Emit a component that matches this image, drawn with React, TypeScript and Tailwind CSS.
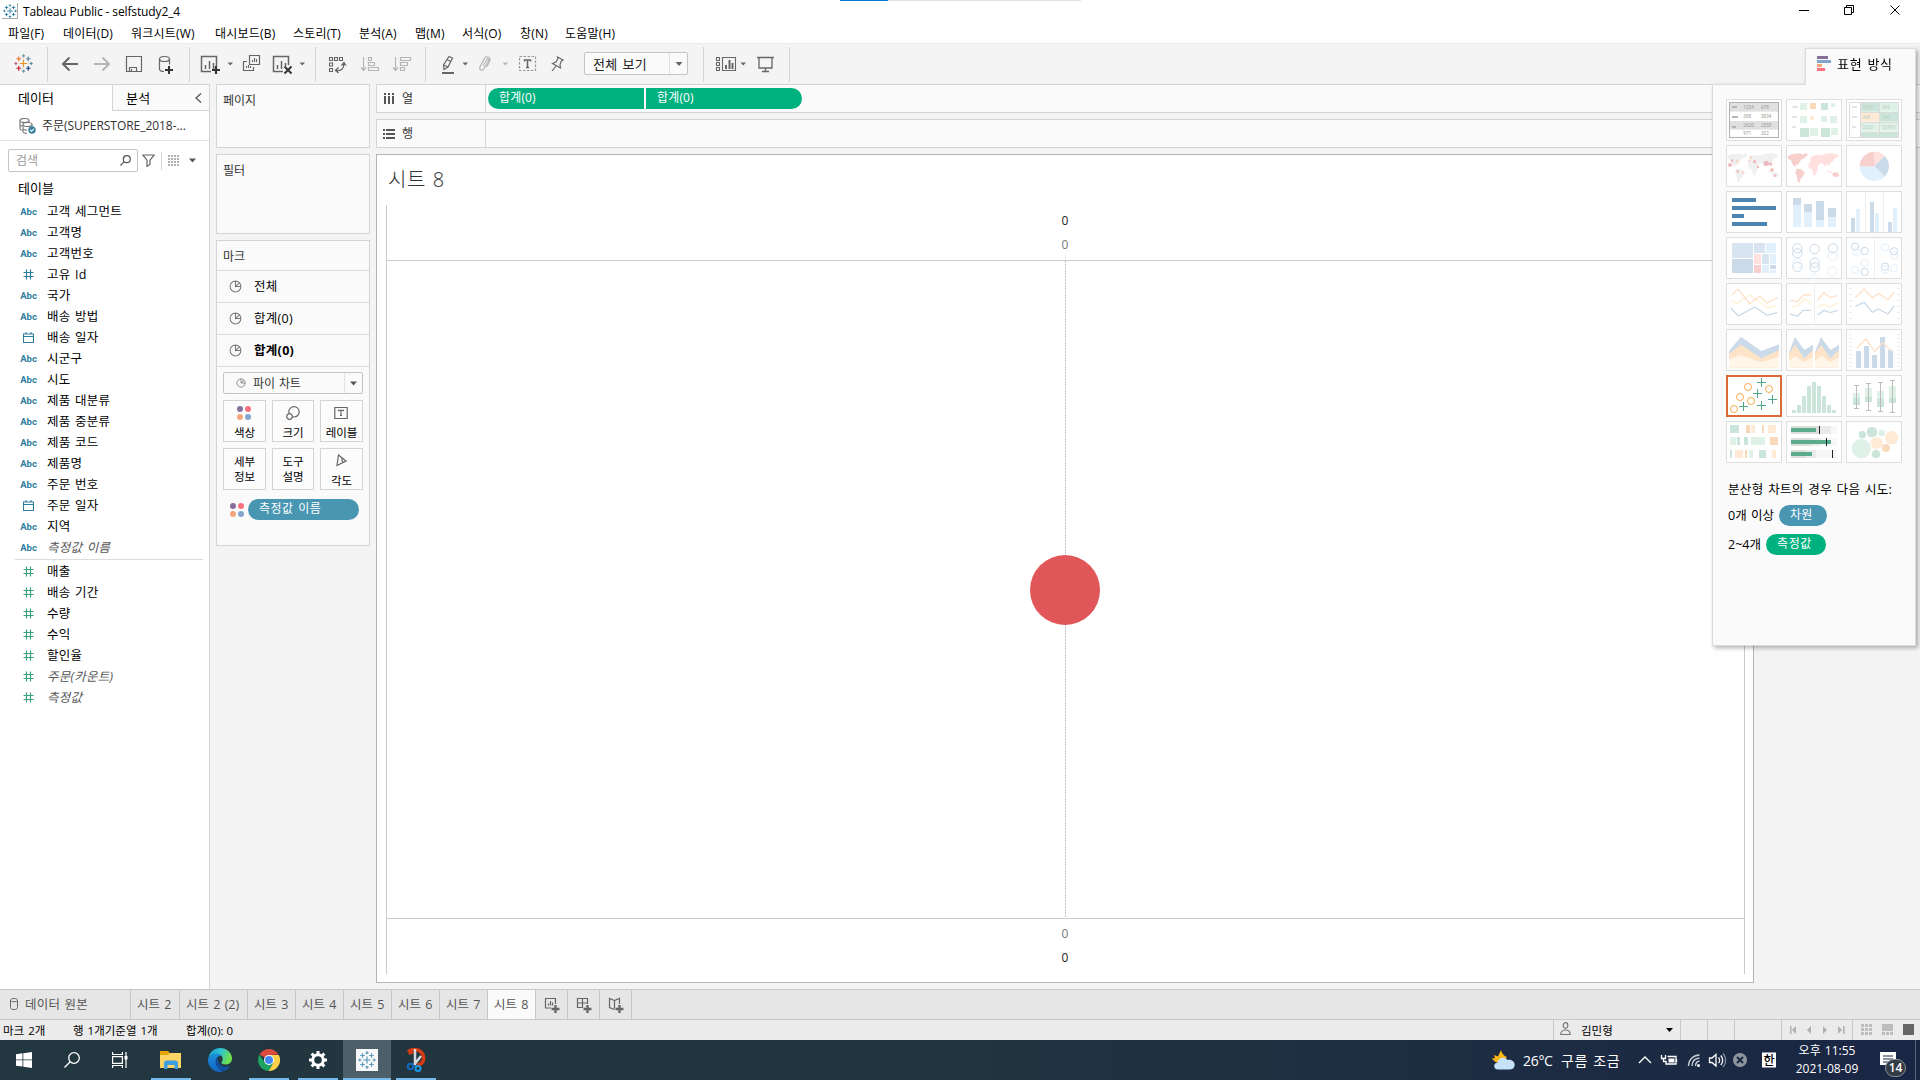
import React from 'react';

type Kids = { children?: React.ReactNode };

/* ---------- shared pieces ---------- */

// Toolbar glyph: the view box is expressed in window coordinates (row 51..75).
function Tool({ x, w, cls, children }: { x: number; w: number; cls: string } & Kids) {
  return (
    <svg className={`h-6 shrink-0 ${cls}`} width={w} height={24} viewBox={`${x} 51 ${w} 24`} fill="none" stroke="#666" strokeWidth="1.5">
      {children}
    </svg>
  );
}

const Sep = ({ cls }: { cls: string }) => <div className={`-mt-1 h-[35px] w-px shrink-0 bg-[#d4d4d4] ${cls}`} />;

function Caret({ cls, color = '#666' }: { cls: string; color?: string }) {
  return (
    <svg className={`h-6 w-2 shrink-0 ${cls}`} viewBox="0 0 8 24">
      <path d="M.5 11.500h5.500L3.250 14.500z" fill={color} />
    </svg>
  );
}

const plusMarks: [number, number, number, string][] = [
  [12, 12, 4, '#eb912c'],
  [7, 7, 2.5, '#e8762d'],
  [17, 7, 2.5, '#5b879b'],
  [7, 17, 2.5, '#c72035'],
  [17, 17, 2.5, '#1f457e'],
  [12, 4, 1.7, '#7199a6'],
  [12, 20, 1.7, '#7199a6'],
  [4, 12, 1.7, '#c0637a'],
  [20, 12, 1.7, '#59879b'],
];

function TableauMark({ cls, color }: { cls: string; color?: string }) {
  return (
    <svg className={`shrink-0 ${cls}`} viewBox="2 2 20 20" fill="none" strokeWidth="1.3">
      {plusMarks.map(([x, y, r, c], i) => (
        <path key={i} d={`M${x - r} ${y}h${r * 2}M${x} ${y - r}v${r * 2}`} stroke={color ?? c} />
      ))}
    </svg>
  );
}

function PieIcon({ cls }: { cls: string }) {
  return (
    <svg className={`shrink-0 ${cls}`} viewBox="0 0 14 14" fill="none" stroke="#777" strokeWidth="1.1">
      <circle cx="7" cy="7" r="5.8" />
      <path d="M7 1.2V7l4.2-4M7 7h5.8" />
    </svg>
  );
}

function ColorDots({ cls }: { cls: string }) {
  return (
    <svg className={`shrink-0 ${cls}`} viewBox="0 0 14 14">
      <circle cx="3" cy="3" r="3" fill="#85719b" />
      <circle cx="11" cy="3" r="3" fill="#f8717f" />
      <circle cx="3" cy="11" r="3" fill="#f4a67a" />
      <circle cx="11" cy="11" r="3" fill="#82a5cf" />
    </svg>
  );
}

/* ---------- title, menu, toolbar ---------- */

function TitleBar() {
  return (
    <div className="relative flex h-[22px] items-center bg-white text-[12px]">
      <div className="ml-0.5 flex h-4 w-4 items-center justify-center border-r border-b border-[#aaa]">
        <TableauMark cls="h-[14px] w-[14px]" color="#2f7fa8" />
      </div>
      <span className="ml-[5px] pt-0.5 tracking-[-0.12px] [word-spacing:0]">Tableau Public - selfstudy2_4</span>
      <div className="absolute top-0 left-[840px] flex h-px w-[241px] bg-[#e1e1e1]">
        <div className="h-px w-12 bg-[#0078d7]" />
      </div>
      <svg className="absolute top-0 right-0 h-5 w-[130px]" viewBox="1790 0 130 20" fill="none" stroke="#000" strokeWidth="1">
        <path d="M1799 10.5h10" />
        <path d="M1844.5 7.500h7v7h-7zM1846.500 7.500v-2h7v7h-2" />
        <path d="M1890.500 5.500l9 9M1899.500 5.500l-9 9" />
      </svg>
    </div>
  );
}

const menus: [string, string][] = [
  ['파일(F)', 'w-[55px]'],
  ['데이터(D)', 'w-[68px]'],
  ['워크시트(W)', 'w-[84px]'],
  ['대시보드(B)', 'w-[78px]'],
  ['스토리(T)', 'w-[66px]'],
  ['분석(A)', 'w-[56px]'],
  ['맵(M)', 'w-[47px]'],
  ['서식(O)', 'w-[58px]'],
  ['창(N)', 'w-[45px]'],
  ['도움말(H)', 'w-[60px]'],
];

function MenuBar() {
  return (
    <div className="flex h-[21px] items-center bg-white pt-0.5 pl-2 text-[12px] tracking-[0.2px]">
      {menus.map(([t, w]) => (
        <div key={t} className={`shrink-0 whitespace-nowrap ${w}`}>{t}</div>
      ))}
    </div>
  );
}

function Toolbar() {
  return (
    <div className="flex h-[41px] items-start border-t border-[#ececec] bg-[#f4f4f4] pt-[7px]">
      <TableauMark cls="mt-[3px] ml-[14px] h-[19px] w-[19px]" />
      <Sep cls="ml-[14px]" />
      <Tool x={60} w={20} cls="ml-3"><path d="M63 64h15M69.500 57.500L63 64l6.500 6.500" strokeWidth="2" /></Tool>
      <Tool x={92} w={20} cls="ml-3"><path d="M94 64h15M102.500 57.500L109 64l-6.500 6.500" stroke="#b5b5b5" strokeWidth="2" /></Tool>
      <Tool x={124} w={20} cls="ml-3"><path d="M126.500 56.500h15v15h-15zM129.500 71v-3.500h7V71M131.500 69v2" strokeWidth="1.2" /></Tool>
      <Tool x={156} w={20} cls="ml-3">
        <ellipse cx="164.500" cy="59" rx="5" ry="2.500" strokeWidth="1.200" />
        <path d="M159.500 59v10c0 1.500 2 2.500 4.500 2.500M169.500 59v5.500" strokeWidth="1.200" />
        <path d="M169 66v8M165 70h8" stroke="#333" strokeWidth="2" />
      </Tool>
      <Sep cls="ml-[13px]" />
      <Tool x={200} w={22} cls="ml-[10px]">
        <path d="M211 71.500h-9.500v-15h15V66" />
        <path d="M205.500 69v-4M209.500 69v-8M213.500 69v-6" />
        <path d="M216 66v8M212 70h8" stroke="#333" strokeWidth="2.200" />
      </Tool>
      <Caret cls="ml-[5px]" />
      <Tool x={242} w={20} cls="ml-[7px]">
        <path d="M249.500 55.500h10v9h-10zM247 61.500h-3.500v9h10V67" strokeWidth="1.200" />
        <path d="M252.500 62v-2M254.500 62v-4M256.500 62v-3M246.500 68v-2M248.500 68v-3M250.500 68v-2" strokeWidth="1.100" />
      </Tool>
      <Tool x={272} w={22} cls="ml-[10px]">
        <path d="M283 71.500h-9.500v-15h15V65" />
        <path d="M277.500 69v-4M281.500 69v-8M285.500 66v-3" />
        <path d="M284.500 66.500l7 7M291.500 66.500l-7 7" stroke="#333" strokeWidth="2" />
      </Tool>
      <Caret cls="ml-[5px]" />
      <Sep cls="ml-2" />
      <Tool x={327} w={20} cls="ml-[11px]">
        <path d="M329.500 57.500h3v3h-3zM334.500 57.500h3v3h-3zM339.500 57.500h3v3h-3zM329.500 63h3v3h-3zM329.500 68.500h3v3h-3z" strokeWidth="1.100" />
        <path d="M336 70.500c5 1 8-2 8-7M338.500 67.500l-3 3 3 2.500M341.500 65.500l2.500-3 2 3" strokeWidth="1.300" />
      </Tool>
      <Tool x={360} w={20} cls="ml-[13px]">
        <path d="M363.500 57v13M361 67.500l2.500 3 2.500-3M368.500 57.500h3v3h-3zM368.500 62.500h6v3h-6zM368.500 67.500h10v3h-10z" stroke="#b5b5b5" strokeWidth="1.200" />
      </Tool>
      <Tool x={392} w={20} cls="ml-3">
        <path d="M395.500 57v13M393 67.500l2.500 3 2.500-3M400.500 57.500h10v3h-10zM400.500 62.500h7v3h-7zM400.500 67.500h4v3h-4z" stroke="#b5b5b5" strokeWidth="1.200" />
      </Tool>
      <Sep cls="ml-[13px]" />
      <Tool x={440} w={16} cls="ml-[14px]">
        <path d="M449 56.500l3.500 1.500-4.500 9-4 2.500-.5-4.500zM443.500 65l4.500 2M447.500 60l3.500 1.500" strokeWidth="1.200" />
        <path d="M442 73h12" strokeWidth="2" />
      </Tool>
      <Caret cls="ml-[6px]" />
      <Tool x={477} w={16} cls="ml-[7px]">
        <path d="M483 66l3.500-6c1-2 3-1 2 .8l-4.500 8c-1.500 2.500-5.500 1-4-2l4.500-8.500c1.500-2.500 6-1.500 5.500 1.500-.3 1.500-2 5-3.500 7" stroke="#b5b5b5" strokeWidth="1.200" />
      </Tool>
      <Caret cls="ml-[9px]" color="#b5b5b5" />
      <Tool x={518} w={20} cls="ml-2">
        <path d="M519.500 56.500h16v14h-16z" stroke="#999" strokeDasharray="2.500 1.500" strokeWidth="1.200" />
        <path d="M524.500 61.500v-1.500h6v1.500M527.500 60v7.500M526 67.500h3" />
      </Tool>
      <Tool x={550} w={16} cls="ml-3">
        <path d="M557.500 57l5.500 3-1.500.8-1.500 3.700.5 3.500-8-4.500 3.500-1.500 2-3.500zM556 66l-4 5" strokeWidth="1.200" />
      </Tool>
      <div className="mt-px ml-[18px] flex h-[23px] w-[104px] shrink-0 items-center rounded-[2px] border border-[#c4c4c4] bg-[#fafafa] pl-2">
        <span className="w-[76px] pt-px text-[13px] tracking-[0.4px] whitespace-nowrap text-[#222]">전체 보기</span>
        <div className="flex h-[21px] items-center border-l border-[#e2e2e2] pl-[5px]">
          <svg className="h-2 w-2" viewBox="0 0 8 8"><path d="M.5 2h7L4 6z" fill="#666" /></svg>
        </div>
      </div>
      <Sep cls="ml-[15px]" />
      <Tool x={715} w={22} cls="ml-[11px]">
        <path d="M716.500 57.500h3v3h-3zM716.500 62.500h3v3h-3zM716.500 67.500h3v3h-3zM722.500 57.500h13v13h-13z" strokeWidth="1.100" />
        <path d="M726 69v-4M729.500 69v-9M732.500 69v-6" strokeWidth="2" />
      </Tool>
      <Caret cls="ml-[3px]" />
      <Tool x={756} w={20} cls="ml-2">
        <path d="M757 57.500h17M759 58v10h13V58M765.500 68v4M762 71.500h7" strokeWidth="1.300" />
      </Tool>
      <Sep cls="ml-[13px]" />
    </div>
  );
}

/* ---------- data pane ---------- */

type Field = [kind: 'abc' | 'num' | 'date', label: string, italic?: boolean];

const dims: Field[] = [
  ['abc', '고객 세그먼트'], ['abc', '고객명'], ['abc', '고객번호'], ['num', '고유 Id'], ['abc', '국가'],
  ['abc', '배송 방법'], ['date', '배송 일자'], ['abc', '시군구'], ['abc', '시도'], ['abc', '제품 대분류'],
  ['abc', '제품 중분류'], ['abc', '제품 코드'], ['abc', '제품명'], ['abc', '주문 번호'], ['date', '주문 일자'],
  ['abc', '지역'], ['abc', '측정값 이름', true],
];

const measures: Field[] = [
  ['num', '매출'], ['num', '배송 기간'], ['num', '수량'], ['num', '수익'], ['num', '할인율'],
  ['num', '주문(카운트)', true], ['num', '측정값', true],
];

function FieldRow({ f, color }: { f: Field; color: string }) {
  const [kind, label, italic] = f;
  return (
    <div className="flex h-[21px] items-center pl-[19px]">
      <div className={`flex w-5 shrink-0 justify-center ${color}`}>
        {kind === 'abc' && <span className="pr-px font-['Roboto'] text-[9.5px] leading-none font-bold">Abc</span>}
        {kind === 'num' && (
          <svg className="mr-px h-[11px] w-[11px]" viewBox="0 0 11 11" stroke="currentColor" strokeWidth="1.200">
            <path d="M3.500 .5v10M7.500 .5v10M.5 3.500h10M.5 7.500h10" />
          </svg>
        )}
        {kind === 'date' && (
          <svg className="mr-px h-[11px] w-[11px]" viewBox="0 0 11 11" fill="none" stroke="currentColor" strokeWidth="1.100">
            <path d="M.5 2h10v8.500H.5zM.5 4.500h10M3 0v2M8 0v2" />
          </svg>
        )}
      </div>
      <span className={`ml-2 pt-0.5 text-[12.5px] tracking-[0.25px] whitespace-nowrap ${italic ? 'text-[#555] italic' : 'text-black'}`}>{label}</span>
    </div>
  );
}

function DataPane() {
  return (
    <div className="flex w-[210px] shrink-0 flex-col border-t border-r border-[#d4d4d4] bg-white">
      <div className="flex h-[26px] text-[13px]">
        <div className="w-[112px] pl-[18px] leading-[26px]">데이터</div>
        <div className="flex flex-1 items-center justify-between border-b border-l border-[#d4d4d4] bg-[#fafafa] pr-[7px] pl-[13px]">
          <span className="pt-px tracking-[0.2px]">분석</span>
          <svg className="h-[10px] w-[7px]" viewBox="0 0 7 10" fill="none" stroke="#555" strokeWidth="1.300"><path d="M6 .5L1 5l5 4.500" /></svg>
        </div>
      </div>
      <div className="flex h-[30px] items-center border-b border-[#e2e2e2] pl-[19px] text-[#333]">
        <svg className="h-4 w-[17px]" viewBox="0 0 17 16" fill="none" stroke="#777" strokeWidth="1.100">
          <ellipse cx="5.500" cy="2.500" rx="4.500" ry="2" />
          <path d="M1 2.500v8c0 1 1 1.700 2.500 2M10 2.500v2M1 6.500c0 1 1 1.500 2.500 1.800" />
          <ellipse cx="8.500" cy="6.500" rx="4.500" ry="2" />
          <path d="M4 6.500v7c0 1 1.500 1.800 4 1.900M13 6.500v2M4 10.500c0 1 1.500 1.500 4 1.600" />
          <circle cx="13" cy="12" r="3.700" fill="#3c7f9f" stroke="none" />
          <path d="M11.200 12l1.300 1.300 2.300-2.500" stroke="#fff" />
        </svg>
        <span className="ml-[6px] text-[12px] tracking-[-0.05px] whitespace-nowrap">주문(SUPERSTORE_2018-...</span>
      </div>
      <div className="mt-2 flex h-[23px] items-center pl-2">
        <div className="flex h-[23px] w-[130px] items-center justify-between rounded-[2px] border border-[#c4c4c4] pr-[6px] pl-[7px] text-[12px] text-[#999]">
          <span>검색</span>
          <svg className="h-[11px] w-[11px]" viewBox="0 0 11 11" fill="none" stroke="#555" strokeWidth="1.200"><circle cx="6.800" cy="4.200" r="3.500" /><path d="M4.300 6.700L.5 10.500" /></svg>
        </div>
        <svg className="ml-1 h-[13px] w-[13px]" viewBox="0 0 13 13" fill="none" stroke="#666" strokeWidth="1.200"><path d="M.8 1h11.400L8 6.200v4.300L5 12.300V6.200z" /></svg>
        <div className="ml-[6px] h-[18px] w-px bg-[#d4d4d4]" />
        <svg className="ml-[6px] h-[11px] w-3" viewBox="0 0 12 11" stroke="#666" strokeWidth="1.100" strokeDasharray="2 1"><path d="M0 1h12M0 4h12M0 7h12M0 10h12" /></svg>
        <svg className="ml-[9px] h-[5px] w-[7px]" viewBox="0 0 7 5"><path d="M0 .5h7l-3.500 4z" fill="#555" /></svg>
      </div>
      <div className="mt-[7px] h-[22px] shrink-0 pl-[18px] text-[13px] leading-[19px]">테이블</div>
      {dims.map((f) => <FieldRow key={f[1]} f={f} color="text-[#2f7d9c]" />)}
      <div className="mt-px mr-[6px] ml-[15px] mb-px h-px shrink-0 bg-[#dcdcdc]" />
      {measures.map((f) => <FieldRow key={f[1]} f={f} color="text-[#3aa37d]" />)}
    </div>
  );
}

/* ---------- cards ---------- */

function MarkButton({ cls, children }: { cls: string } & Kids) {
  return (
    <div className={`flex h-[42px] flex-col items-center border border-[#d4d4d4] bg-[#fcfcfc] text-[11.5px] leading-[15px] whitespace-nowrap ${cls}`}>
      {children}
    </div>
  );
}

function Cards() {
  return (
    <div className="ml-[6px] flex w-[154px] shrink-0 flex-col gap-[6px] text-[12px] text-[#333]">
      <div className="h-16 border border-[#d4d4d4] bg-[#fafafa] pt-[7px] pl-[6px] leading-[17px]">페이지</div>
      <div className="h-20 border border-[#d4d4d4] bg-[#fafafa] pt-[7px] pl-[6px] leading-[17px]">필터</div>
      <div className="h-[306px] border border-[#d4d4d4] bg-[#fafafa]">
        <div className="h-[29px] pl-[6px] leading-[31px]">마크</div>
        {['전체', '합계(0)', '합계(0)'].map((t, i) => (
          <div key={i} className={`flex h-8 items-center border-t border-[#dcdcdc] pl-3 text-black ${i === 2 ? 'font-bold' : ''}`}>
            <PieIcon cls="mb-px h-[13px] w-[13px]" />
            <span className="ml-3 pt-0.5 text-[12.5px] tracking-[0.3px]">{t}</span>
          </div>
        ))}
        <div className="border-t border-[#dcdcdc] px-[6px] pt-[5px]">
          <div className="flex h-[22px] w-[140px] items-center rounded-[2px] border border-[#c4c4c4] pl-3">
            <PieIcon cls="h-[10px] w-[10px]" />
            <span className="ml-[7px] w-[91px] pt-px text-[12px] tracking-[-0.1px]">파이 차트</span>
            <div className="flex h-5 items-center border-l border-[#e2e2e2] pl-[5px]">
              <svg className="h-[5px] w-[7px]" viewBox="0 0 7 5"><path d="M0 .5h7l-3.500 4z" fill="#555" /></svg>
            </div>
          </div>
          <div className="mt-[6px] flex gap-[6px] text-black">
            <MarkButton cls="w-[43px] pt-[5px]"><ColorDots cls="mr-px mb-[5px] h-[14px] w-[14px]" />색상</MarkButton>
            <MarkButton cls="w-[42px] pt-[5px]">
              <svg className="mb-[5px] h-[14px] w-[14px]" viewBox="0 0 14 14" fill="none" stroke="#666" strokeWidth="1.200"><circle cx="8" cy="5.800" r="5.200" /><circle cx="3.500" cy="10.500" r="2.800" fill="#fafafa" /></svg>
              크기
            </MarkButton>
            <MarkButton cls="w-[43px] pt-[5px]">
              <svg className="mr-[2px] mb-[5px] h-[14px] w-[14px]" viewBox="0 0 14 14" fill="none" stroke="#666" strokeWidth="1.200"><path d="M.8 1.500h12.400v11H.8zM4.500 5.200V4.300h5v.9M7 4.300v5.200M6 9.500h2" /></svg>
              레이블
            </MarkButton>
          </div>
          <div className="mt-[6px] flex gap-[6px] text-black">
            <MarkButton cls="w-[43px] pt-[5px]"><span>세부</span><span>정보</span></MarkButton>
            <MarkButton cls="w-[42px] pt-[5px]"><span>도구</span><span>설명</span></MarkButton>
            <MarkButton cls="w-[43px] pt-[5px]">
              <svg className="mr-px mb-[6px] h-[13px] w-[12px]" viewBox="0 0 12 13" fill="none" stroke="#666" strokeWidth="1.200"><path d="M3.500 1l7.500 6L2 11.500zM7 4c-.3 2 .2 3.500 1.200 4.500" /></svg>
              각도
            </MarkButton>
          </div>
          <div className="mt-[9px] flex h-[21px] items-center pl-[7px]">
            <ColorDots cls="h-[14px] w-[14px]" />
            <div className="ml-1 h-[21px] w-[111px] rounded-full bg-[#4996b2] pl-[11px] text-[12px] leading-[19px] tracking-[0.5px] text-white">측정값 이름</div>
          </div>
        </div>
      </div>
    </div>
  );
}

/* ---------- shelves and sheet ---------- */

function Shelf({ label, icon, children }: { label: string; icon: React.ReactNode } & Kids) {
  return (
    <div className="flex h-[29px] shrink-0 border-y border-l border-[#d4d4d4] bg-[#fafafa]">
      <div className="flex w-[109px] shrink-0 items-center border-r border-[#d4d4d4] pl-[6px] text-[12px] text-[#333]">
        {icon}
        <span className="ml-[7px] pt-px">{label}</span>
      </div>
      {children}
    </div>
  );
}

function Workspace() {
  return (
    <div className="ml-[6px] flex min-w-0 flex-1 flex-col">
      <Shelf label="열" icon={<svg className="h-[13px] w-3" viewBox="0 0 12 13" fill="#555"><path d="M1 1h2v2H1zM1 4h2v8H1zM5 1h2v2H5zM5 4h2v8H5zM9 1h2v2H9zM9 4h2v8H9z" /></svg>}>
        <div className="mt-[3px] ml-[2px] flex h-[21px] gap-[2px] text-[12px] leading-[19px] tracking-[0.15px] text-white">
          <div className="w-[156px] rounded-l-full bg-[#00b180] pl-[11px]">합계(0)</div>
          <div className="w-[156px] rounded-r-full bg-[#00b180] pl-[11px]">합계(0)</div>
        </div>
      </Shelf>
      <div className="h-[6px] shrink-0" />
      <Shelf label="행" icon={<svg className="h-3 w-3" viewBox="0 0 12 12" fill="#555"><path d="M0 1h2v2H0zM3 1h9v2H3zM0 5h2v2H0zM3 5h9v2H3zM0 9h2v2H0zM3 9h9v2H3z" /></svg>} />
      <div className="mt-[6px] flex h-[829px] w-[1378px] flex-col border border-[#b4b4b4] bg-white pr-2 pl-[9px]">
        <div className="h-[50px] pt-[9px] pl-[2px] text-[20px] leading-[32px] font-light tracking-[0.6px] text-[#333]">시트 8</div>
        <div className="flex h-[769px] flex-col border-x border-[#cbcbcb] text-center text-[12px]">
          <div className="flex h-[56px] flex-col items-center border-b border-[#cbcbcb] pt-1 pr-px">
            <span className="h-6 leading-6 text-[#222]">0</span>
            <span className="h-[22px] leading-6 text-[#777]">0</span>
            <div className="h-[5px] w-px bg-[#f0f0f0]" />
          </div>
          <div className="relative flex flex-1 items-center justify-center pr-px">
            <div className="absolute inset-y-0 left-[678px] w-px bg-[repeating-linear-gradient(to_bottom,#c4c4c4_0px,#c4c4c4_2px,#ffffff_2px,#ffffff_3px)]" />
            <div className="relative h-[70px] w-[70px] rounded-full bg-[#e15759]" />
          </div>
          <div className="flex h-[56px] flex-col items-center border-t border-[#cbcbcb] pt-[3px] pr-px">
            <span className="h-6 leading-6 text-[#777]">0</span>
            <span className="h-6 leading-6 text-[#222]">0</span>
          </div>
        </div>
      </div>
    </div>
  );
}

/* ---------- Show Me ---------- */

// Thumbnails are drawn on a 3x grid; x/y is the grid origin of each cell.
function Thumb({ x, y, on, children }: { x: number; y: number; on?: boolean } & Kids) {
  return on ? (
    <svg className="h-[42px] w-[56px] border-2 border-[#dc6a35] bg-white" viewBox={`${x + 6} ${y + 6} 156 114`} fill="none">{children}</svg>
  ) : (
    <svg className="h-[42px] w-[56px] border border-[#dedede] bg-white" viewBox={`${x + 3} ${y + 3} 162 120`} fill="none">{children}</svg>
  );
}

type R = [number, number, number, number, string];
const Rects = ({ d }: { d: R[] }) => (
  <>{d.map(([x, y, w, h, c], i) => <rect key={i} x={x} y={y} width={w} height={h} fill={c} />)}</>
);
type C = [number, number, number, string];
const Dots = ({ d }: { d: C[] }) => <>{d.map(([x, y, r, c], i) => <circle key={i} cx={x} cy={y} r={r} fill={c} />)}</>;
const Rings = ({ d, r, w }: { d: [number, number, string][]; r: number; w: number }) => (
  <>{d.map(([x, y, c], i) => <circle key={i} cx={x} cy={y} r={r} stroke={c} strokeWidth={w} />)}</>
);

const G1 = '#cce5da', G2 = '#e0f2e8', O1 = '#fad9bb', O2 = '#ffead6', B1 = '#cbdae8', B2 = '#e2f0fb', R1 = '#f7cfcd', R2 = '#ffe0df', K = '#e4e4e4';
const LO = '#fee2ca', LY = '#fff1d6';

function World({ dx, a, b }: { dx: number; a: string; b: string }) {
  return (
    <g transform={`translate(${dx} 0)`}>
      <path fill={a} d="M2 348l12-5 22-3 12 4 6-4 8 2-6 8-8 6-6 2-6 10-4 6-8 1 4 8-8-5-6-8-2-8-8-6-4-2zM28 386l12 1 12 9-4 12-8 8-4 13-5-4-2-15-5-12z" />
      <path fill={b} d="M68 356l8-8 12-4 12 2 14-4 18-3 22 6-4 8-8 2-5 10-8 4-4 10-6-8-6 10-8-12-8 2-6 8 0 10-6 16-6 2-4-18-10-4-2-12 6-8z" />
      <path fill={a} d="M133 402l10-6 10 2 2 10-6 4-10-3z" />
      <path fill={b} d="M118 388l8 6 8 2-2 4-10-4z" />
    </g>
  );
}

function Gallery() {
  return (
    <div className="grid grid-cols-[56px_56px_56px] gap-1">
      <Thumb x={78} y={177}>
        <rect x="88.500" y="187.500" width="147" height="105" stroke="#b0b0b0" strokeWidth="3" />
        <Rects d={[[90, 189, 144, 26, '#e0e0e0'], [90, 243, 144, 26, '#e0e0e0'], [96, 198, 15, 6, '#b5b5b5'], [96, 228, 18, 6, '#b5b5b5'], [96, 258, 12, 6, '#b5b5b5']]} />
        <g fill="#999" fontSize="14" fontFamily="Roboto">
          <text x="130" y="207">1234</text><text x="183" y="207">678</text><text x="130" y="235">368</text><text x="183" y="235">3034</text>
          <text x="130" y="262">2620</text><text x="183" y="262">2559</text><text x="130" y="286">971</text><text x="183" y="286">322</text>
        </g>
      </Thumb>
      <Thumb x={258} y={177}>
        <Rects d={[[276, 198, 18, 6, K], [276, 228, 15, 6, K], [276, 258, 12, 6, K], [300, 189, 21, 21, G2], [330, 189, 18, 18, O1], [363, 189, 21, 21, G1], [393, 189, 12, 12, G2], [300, 228, 21, 21, G2], [330, 228, 12, 12, O2], [363, 228, 18, 18, G2], [390, 228, 21, 21, G2], [300, 264, 27, 27, G1], [330, 264, 24, 24, G2], [363, 264, 27, 27, G1], [393, 264, 21, 21, G2]]} />
      </Thumb>
      <Thumb x={438} y={177}>
        <Rects d={[[456, 198, 15, 6, K], [456, 228, 15, 6, K], [456, 258, 12, 6, K], [483, 189, 54, 26, G1], [540, 189, 54, 26, G2], [483, 219, 54, 26, O2], [540, 219, 54, 26, G1], [483, 249, 54, 26, G2], [540, 249, 54, 26, G2], [483, 279, 54, 12, G1], [540, 279, 54, 12, G1]]} />
        <path d="M448.500 187.500h147v105h-147zM481.500 187v105M538.500 187v105M481 217.500h114M481 247.500h114M481 277.500h114" stroke="#dcdcdc" strokeWidth="3" />
        <g fill="#b9cfc4" fontSize="14" fontFamily="Roboto">
          <text x="487" y="207">1234</text><text x="546" y="207">546</text><text x="487" y="238">368</text><text x="546" y="238">340</text><text x="487" y="267">2620</text><text x="546" y="267">53890</text>
        </g>
      </Thumb>

      <Thumb x={78} y={315}>
        <World dx={81} a="#f0f0f0" b="#f0f0f0" />
        <Dots d={[[90, 375, 6, '#ecb9bf'], [96, 362, 4, '#ecb9bf'], [112, 364, 5, '#fbdad6'], [152, 352, 5, '#fbd5c8'], [164, 365, 5, '#ecb9bf'], [148, 363, 4, '#fbdad6'], [199, 370, 8, '#ecb9bf'], [212, 372, 5, '#ecb9bf'], [216, 390, 6, '#f3c4c4'], [174, 381, 4, '#ecb9bf'], [129, 397, 5, '#fbdad6'], [113, 394, 4, '#ecb9bf'], [225, 407, 4, '#ecb9bf']]} />
      </Thumb>
      <Thumb x={258} y={315}><World dx={262} a={R1} b={R2} /></Thumb>
      <Thumb x={438} y={315}>
        <path d="M523 379V335.500A43.500 43.500 0 0 1 554 348z" fill={R2} />
        <path d="M523 379L554 348A43.500 43.500 0 0 1 554 410z" fill={B1} />
        <path d="M523 379L554 410A43.500 43.500 0 0 1 479.500 379z" fill={B2} />
        <path d="M523 379H479.500A43.500 43.500 0 0 1 523 335.500z" fill={R1} />
      </Thumb>

      <Thumb x={78} y={453}>
        <Rects d={[[96, 474, 72, 12, '#4e84b0'], [96, 498, 132, 12, '#4e84b0'], [96, 522, 36, 12, '#4e84b0'], [96, 546, 105, 12, '#4e84b0']]} />
      </Thumb>
      <Thumb x={258} y={453}>
        <Rects d={[[279, 474, 24, 21, B1], [279, 495, 24, 66, B2], [312, 492, 24, 24, B1], [312, 516, 24, 45, B2], [348, 483, 24, 57, B1], [348, 540, 24, 21, B2], [384, 504, 24, 27, B1], [384, 531, 24, 30, B2]]} />
      </Thumb>
      <Thumb x={438} y={453}>
        <Rects d={[[495, 456, 3, 120, '#eee'], [549, 456, 3, 120, '#eee'], [453, 534, 12, 42, B1], [468, 507, 12, 69, B2], [510, 486, 12, 90, B1], [525, 519, 12, 57, B2], [564, 546, 12, 30, B1], [579, 504, 12, 72, B2]]} />
      </Thumb>

      <Thumb x={78} y={591}>
        <Rects d={[[96, 609, 63, 45, '#d8e5f0'], [96, 657, 63, 42, B1], [162, 609, 33, 30, '#d8e5f0'], [198, 609, 30, 30, B2], [162, 642, 21, 30, R2], [186, 642, 21, 30, '#d8e5f0'], [210, 642, 18, 30, B2], [162, 675, 21, 24, R1], [186, 675, 21, 24, B2], [210, 675, 18, 12, B1], [210, 690, 18, 9, B2]]} />
      </Thumb>
      <Thumb x={258} y={591}>
        <Rings r={14} w={3} d={[[292, 625, B1], [292, 640, B1], [344, 627, B1], [399, 625, B1], [398, 648, B2], [292, 681, B1], [344, 668, B1], [344, 682, B1], [397, 694, B2], [344, 718, B2], [292, 670, B2]]} />
      </Thumb>
      <Thumb x={438} y={591}>
        <Rings r={11} w={3} d={[[465, 620, B1], [468, 635, B2], [494, 633, B1], [555, 622, B2], [582, 634, B1], [583, 646, B2], [494, 669, B2], [465, 690, B2], [494, 696, B1], [555, 680, B1], [555, 689, B2], [582, 685, B2]]} />
        <path d="M523.500 594v120" stroke="#eee" strokeWidth="3" />
      </Thumb>

      <Thumb x={78} y={54}>
        <g strokeWidth="4">
          <path d="M93 107l18 9 38-26 52 38 30-6" stroke={LY} />
          <path d="M96 90l18-18 35 44 30-22 22 20 32-16" stroke={LO} />
          <path d="M92 129l23 24 49-27 37 25 31-9" stroke={B1} />
        </g>
      </Thumb>
      <Thumb x={258} y={54}>
        <path d="M343.500 57v120" stroke="#eee" strokeWidth="3" />
        <g strokeWidth="4">
          <path d="M270 106l22 4 18-20h23M352 107l20-24 18 14 23-5" stroke={LO} />
          <path d="M270 125h22l20-24 20 14M352 125l18-6 22 6 22-12" stroke={LY} />
          <path d="M270 147l22 7 18-18h23M352 150l20-14 18 7 23-7" stroke={B1} />
        </g>
      </Thumb>
      <Thumb x={438} y={54}>
        <path d="M451.500 69v99M595.500 69v99" stroke="#eaeaea" strokeWidth="9" strokeDasharray="3 15" />
        <g strokeWidth="4">
          <path d="M466 98l26-26 25 26 18-12 29 18 20-24" stroke={LO} />
          <path d="M466 124l26-12 25 30 18-10 29 15 18-24" stroke={B1} />
        </g>
      </Thumb>

      <Thumb x={78} y={192}>
        <path d="M87 258l36-43 61 43 53-20v70H87z" fill={B1} /><path d="M87 266l36-27 61 41 53-24v52H87z" fill="#fde3c8" /><path d="M87 282l36-11 61 21 53-17v33H87z" fill="#fff5e8" />
      </Thumb>
      <Thumb x={258} y={192}>
        <path d="M267 262l18-46 28 39 26-16v69h-72zM345 262l18-46 28 39 26-16v69h-72z" fill={B1} /><path d="M267 265l18-26 28 41 26-25v53h-72zM345 265l18-26 28 41 26-25v53h-72z" fill="#fde3c8" /><path d="M267 288l18-16 28 20 26-17v33h-72zM345 288l18-16 28 20 26-17v33h-72z" fill="#fff5e8" />
      </Thumb>
      <Thumb x={438} y={192}>
        <path d="M451.500 207v99M595.500 207v99" stroke="#eaeaea" strokeWidth="9" strokeDasharray="3 9" />
        <Rects d={[[468, 258, 15, 51, B1], [492, 243, 15, 66, B1], [516, 270, 15, 39, B1], [540, 216, 15, 93, B1], [564, 255, 15, 54, B1]]} />
        <path d="M471 248l27-26 26 37 24-26 28 26" stroke={LO} strokeWidth="4" />
      </Thumb>

      <Thumb x={78} y={330} on>
        <Rings r={10.5} w={3} d={[[144, 366, '#f5a94a'], [207, 372, '#f5a94a'], [120, 396, '#f5a94a'], [153, 408, '#f5a94a'], [102, 432, '#f5a94a']]} />
        <path d="M171 352.500h27M184.500 339v27M159 385.500h27M172.500 372v27M204 403.500h27M217.500 390v27M117 424.500h27M130.500 411v27M171 421.500h27M184.500 408v27" stroke="#4fa88a" strokeWidth="3" />
      </Thumb>
      <Thumb x={258} y={330}>
        <Rects d={[[276, 435, 12, 9, G1], [291, 420, 12, 24, G1], [306, 393, 12, 51, G1], [321, 363, 12, 81, G1], [336, 351, 12, 93, G1], [351, 363, 12, 81, G1], [366, 393, 12, 51, G1], [381, 420, 12, 24, G1], [396, 435, 12, 9, G1]]} />
      </Thumb>
      <Thumb x={438} y={330}>
        <Rects d={[[459, 384, 21, 15, G2], [459, 399, 21, 21, G1], [495, 369, 21, 27, G2], [495, 396, 21, 15, G1], [531, 378, 21, 24, G2], [531, 402, 21, 24, G1], [567, 363, 21, 36, G2], [567, 399, 21, 15, G1]]} />
        <path d="M469.500 361v69M462 361.500h15M462 430.500h15M505.500 355v81M498 355.500h15M498 436.500h15M541.500 352v87M534 352.500h15M534 439.500h15M577.500 346v96M570 346.500h15M570 442.500h15" stroke="#bdbdbd" strokeWidth="3" />
      </Thumb>

      <Thumb x={78} y={468}>
        <Rects d={[[90, 480, 27, 24, G1], [138, 480, 12, 24, O1], [153, 480, 12, 24, O2], [186, 480, 6, 24, O1], [204, 480, 24, 24, O2], [90, 516, 18, 24, G2], [111, 516, 9, 24, G1], [132, 516, 12, 24, G1], [153, 516, 42, 24, G2], [210, 516, 24, 24, O1], [90, 555, 6, 24, G1], [105, 555, 24, 24, O2], [135, 555, 6, 24, O1], [147, 555, 12, 24, G2], [177, 555, 21, 24, G1], [216, 555, 12, 24, O2]]} />
      </Thumb>
      <Thumb x={258} y={468}>
        <Rects d={[[273, 483, 138, 24, '#f6f7f8'], [273, 483, 120, 24, '#eaeaea'], [273, 483, 87, 24, '#dedede'], [273, 489, 75, 12, '#59ad8c'], [357, 483, 3, 24, '#222'], [273, 519, 138, 24, '#f6f7f8'], [273, 519, 88, 24, '#eaeaea'], [273, 519, 60, 24, '#dedede'], [273, 525, 120, 12, '#59ad8c'], [378, 519, 3, 24, '#222'], [273, 555, 138, 24, '#f6f7f8'], [273, 555, 75, 24, '#eaeaea'], [273, 555, 45, 24, '#dedede'], [273, 561, 63, 12, '#59ad8c'], [396, 555, 3, 24, '#222']]} />
      </Thumb>
      <Thumb x={438} y={468}>
        <Dots d={[[484, 551, 29, G2], [487, 509, 11, G1], [516, 501, 16, G1], [545, 504, 10, G2], [575, 518, 20, O2], [530, 534, 18, O2], [558, 549, 12, O1], [528, 567, 13, G1]]} />
      </Thumb>
    </div>
  );
}

function ShowMe() {
  return (
    <div className="absolute top-12 left-[1712px] flex w-[204px] flex-col items-end drop-shadow-[2px_2px_2px_rgba(0,0,0,0.3)]">
      <div className="relative z-10 flex h-[37px] w-[111px] items-start border-x border-t border-[#dcdcdc] bg-[#fafafa] pt-[7px] pl-[11px]">
        <svg className="h-[15px] w-[14px]" viewBox="0 0 14 15"><path d="M0 0h11v3H0z" fill="#85719b" /><path d="M0 4h14v3H0z" fill="#82a5cf" /><path d="M0 8h5v3H0z" fill="#f4a67a" /><path d="M0 12h8v3H0z" fill="#f8717f" /></svg>
        <span className="ml-[6px] text-[13px] leading-[17px] tracking-[0.7px] whitespace-nowrap">표현 방식</span>
      </div>
      <div className="-mt-px h-[562px] w-[204px] border border-[#dcdcdc] bg-[#fafafa] pt-[14px] pl-[13px] text-[12.5px]">
        <Gallery />
        <div className="mt-[17px] ml-[2px] h-5 leading-5 tracking-[0.35px] whitespace-nowrap">분산형 차트의 경우 다음 시도:</div>
        <div className="mt-[5px] ml-[2px] flex h-[21px] items-center leading-5">
          <span className="w-[51px] whitespace-nowrap">0개 이상</span>
          <div className="h-[21px] w-12 rounded-full bg-[#4996b2] pl-[11px] text-[12px] leading-[19px] tracking-[0.3px] text-white">차원</div>
        </div>
        <div className="mt-2 ml-[2px] flex h-[21px] items-center leading-5">
          <span className="w-[38px] whitespace-nowrap">2~4개</span>
          <div className="h-[21px] w-[60px] rounded-full bg-[#00b180] pl-[11px] text-[12px] leading-[19px] tracking-[0.6px] text-white">측정값</div>
        </div>
      </div>
    </div>
  );
}

/* ---------- sheet tabs and status ---------- */

const sheets: [string, string][] = [
  ['시트 2', 'w-[49px] bg-[#e6e6e6]'],
  ['시트 2 (2)', 'w-[68px] bg-[#e6e6e6]'],
  ['시트 3', 'w-12 bg-[#e6e6e6]'],
  ['시트 4', 'w-12 bg-[#e6e6e6]'],
  ['시트 5', 'w-12 bg-[#e6e6e6]'],
  ['시트 6', 'w-12 bg-[#e6e6e6]'],
  ['시트 7', 'w-12 bg-[#e6e6e6]'],
  ['시트 8', 'w-12 bg-[#fafafa]'],
];

const newTabs = [
  'M7 11H1.500V1.500h10V7M4.500 8.500v-2M6.500 8.500V4M8.500 8.500V5.500',
  'M7 10.500H1.500v-9h10V7M1.500 6h10M6.500 1.500v9',
  'M6.500 3.500v8M6.500 3.500L1.500 1.500v9l5 2M6.500 3.500l5-2V7',
];

function SheetTabs() {
  return (
    <div className="flex h-[31px] shrink-0 border-y border-[#c8c8c8] bg-[#e6e6e6] text-[12.5px] text-[#555]">
      <div className="flex w-[131px] shrink-0 items-center border-r border-[#c8c8c8] pl-[10px]">
        <svg className="mb-px h-3 w-2" viewBox="0 0 8 12" fill="none" stroke="#666" strokeWidth="1"><path d="M.5 2.500v7c0 2.700 7 2.700 7 0v-7c0-2.700-7-2.700-7 0c0 1.600 7 1.600 7 0" /></svg>
        <span className="ml-[7px] pt-0.5 tracking-[0.2px]">데이터 원본</span>
      </div>
      {sheets.map(([t, c]) => (
        <div key={t} className={`flex shrink-0 items-center border-r border-[#c8c8c8] pt-0.5 pl-[6px] whitespace-nowrap ${c}`}>{t}</div>
      ))}
      {newTabs.map((d) => (
        <div key={d} className="flex w-8 shrink-0 items-center justify-center border-r border-[#c8c8c8]">
          <svg className="h-4 w-4" viewBox="0 0 16 16" fill="none" stroke="#666" strokeWidth="1.200"><path d={d} /><path d="M11.500 8v8M7.500 12h8" strokeWidth="2.300" /></svg>
        </div>
      ))}
    </div>
  );
}

function StatusBar() {
  return (
    <div className="flex h-5 shrink-0 items-center bg-[#ebebeb] text-[11.5px]">
      <span className="w-[70px] pt-px pl-[3px] whitespace-nowrap">마크 2개</span>
      <span className="w-[113px] pt-px pl-[3px] whitespace-nowrap">행 1개기준열 1개</span>
      <span className="pt-px pl-[3px] [word-spacing:0]">합계(0): 0</span>
      <div className="ml-auto flex h-5 w-[127px] items-center border-l border-[#c8c8c8] pl-[6px]">
        <svg className="mb-0.5 h-[14px] w-[11px]" viewBox="0 0 11 14" fill="none" stroke="#777" strokeWidth="1.200"><ellipse cx="5.500" cy="3.500" rx="2.300" ry="2.800" /><path d="M.8 12.500c-.5-6 10-6 9.400 0z" /></svg>
        <span className="ml-[10px] w-[85px] pt-px whitespace-nowrap">김민형</span>
        <svg className="h-1 w-[7px] shrink-0" viewBox="0 0 7 4"><path d="M0 0h7L3.500 4z" /></svg>
      </div>
      <div className="h-5 w-[27px] border-l border-[#c8c8c8]" />
      <div className="h-5 w-[27px] border-l border-[#c8c8c8]" />
      <div className="h-5 w-[47px] border-l border-[#c8c8c8]" />
      <div className="flex h-5 w-[71px] items-center border-l border-[#c8c8c8] pl-2">
        <svg className="h-2 w-[56px]" viewBox="0 0 56 8" fill="#b0b0b0"><path d="M0 0h1.500v8H0zM6 0v8L2 4zM21 0v8l-4-4zM33 0v8l4-4zM48 0v8l4-4zM53 0h1.500v8H53z" /></svg>
      </div>
      <div className="flex h-5 w-[68px] items-center gap-[10px] border-l border-[#c8c8c8] pb-px pl-2">
        <svg className="h-[11px] w-[11px]" viewBox="0 0 11 11" fill="#bdbdbd"><path d="M0 0h3v3H0zM4 0h3v3H4zM8 0h3v3H8zM0 4h3v3H0zM4 4h3v3H4zM8 4h3v3H8zM0 8h3v3H0zM4 8h3v3H4zM8 8h3v3H8z" /></svg>
        <svg className="h-[11px] w-[11px]" viewBox="0 0 11 11" fill="#bdbdbd"><path d="M0 0h11v7H0zM0 8h3v3H0zM4 8h3v3H4zM8 8h3v3H8z" /></svg>
        <div className="h-[11px] w-[11px] bg-[#666]" />
      </div>
    </div>
  );
}

/* ---------- taskbar ---------- */

function TaskItem({ cls, bar, children }: { cls: string; bar?: boolean } & Kids) {
  return (
    <div className={`flex h-10 shrink-0 flex-col items-center justify-end ${cls}`}>
      <div className="flex flex-1 items-center pt-0.5">{children}</div>
      <div className={`h-0.5 w-full shrink-0 ${bar ? 'bg-[#76b9ed]' : ''}`} />
    </div>
  );
}

function Taskbar() {
  return (
    <div className="flex h-10 shrink-0 bg-linear-to-r from-[#22373f] via-[#21343f] to-[#1a2644] text-white">
      <TaskItem cls="w-12"><svg className="h-4 w-4" viewBox="0 0 16 16" fill="#fff"><path d="M0 2.200l6.500-.9v6.200H0zM7.300 1.200L16 0v7.500H7.300zM0 8.300h6.500v6.300L0 13.700zM7.300 8.300H16V16l-8.700-1.200z" /></svg></TaskItem>
      <TaskItem cls="w-12"><svg className="h-4 w-4" viewBox="0 0 16 16" fill="none" stroke="#fff" strokeWidth="1.300"><circle cx="10" cy="6" r="5.300" /><path d="M6.200 9.800L.5 15.500" /></svg></TaskItem>
      <TaskItem cls="w-12"><svg className="h-4 w-4" viewBox="0 0 16 16" fill="none" stroke="#fff" strokeWidth="1.200"><path d="M.6 0v2.500h9.800V0M.6 16v-2.500h9.800V16M.6 4.600h9.800v6.800H.6zM14 0v16" /><path d="M12.500 4h3v3.500h-3z" fill="#fff" stroke="none" /></svg></TaskItem>
      <TaskItem cls="ml-[7px] w-10" bar>
        <svg className="h-[18px] w-[22px]" viewBox="0 0 22 18"><path d="M0 0h8l2 2.500H0z" fill="#e3a21a" /><path d="M0 2h21v15H0z" fill="#ffd466" /><path d="M0 0h8l1.500 2.500L8 4H0z" fill="#e5a50a" /><path d="M4 18v-7l2-1.500h10l2 1.500v7h-3.500v-4h-7v4z" fill="#3f9ee0" /></svg>
      </TaskItem>
      <TaskItem cls="ml-[9px] w-10">
        <svg className="h-6 w-6" viewBox="0 0 24 24">
          <defs>
            <linearGradient id="edgeA" x1="0" y1="0" x2="1" y2="0.300"><stop offset="0" stopColor="#1a9be0" /><stop offset="0.550" stopColor="#2fc2cf" /><stop offset="1" stopColor="#6fe04b" /></linearGradient>
            <linearGradient id="edgeB" x1="0" y1="0" x2="0" y2="1"><stop offset="0" stopColor="#1b8fdc" /><stop offset="1" stopColor="#1363c4" /></linearGradient>
          </defs>
          <path d="M.3 10.500C1.200 4.500 6 0 12.200 0 19 0 24 5 24 10.600c0 3.700-2.800 6-6.200 6-3 0-4.500-.9-4.500-2 0-.9 1.400-1.300 1.400-3.700C14.700 8 12 5.700 8.700 5.700c-3.700 0-7 1.700-8.400 4.800z" fill="url(#edgeA)" />
          <path d="M.1 11C1.500 7.500 5 5.700 8.700 5.700c2 0 3.600.8 4.700 2C10 7.500 7.500 10.500 7.800 14c.4 4.800 4 8 7.200 9.500-1 .3-2 .5-3 .5C5 24 0 18.500 0 12.500z" fill="url(#edgeB)" />
          <path d="M10 9.500c-1.500 1.500-2.200 3-2.100 5 .3 4.500 4 8 8 8.800 2.800-1 5-2.800 6.300-5 .3-.5-.2-.8-.6-.5-4.600 2.500-12.300 0-11.600-8.300z" fill="#0f4f9e" />
        </svg>
      </TaskItem>
      <TaskItem cls="ml-[9px] w-10" bar>
        <svg className="h-[22px] w-[22px]" viewBox="0 0 22 22">
          <path d="M11 11L1.500 5.500A11 11 0 0 1 20.500 5.500L11 6z" fill="#dd4b3e" /><path d="M20.500 5.500A11 11 0 0 1 10.500 22L15.300 13.500 11 6h9.700z" fill="#fdd14a" /><path d="M1.500 5.500A11 11 0 0 0 10.500 22l4.800-8.500-8.600 0z" fill="#1ea362" />
          <circle cx="11" cy="11" r="5" fill="#fff" /><circle cx="11" cy="11" r="4" fill="#4387f5" />
        </svg>
      </TaskItem>
      <TaskItem cls="ml-[9px] w-10" bar>
        <svg className="mr-px h-[18px] w-[18px]" viewBox="0 0 18 18" fill="none" stroke="#fff"><circle cx="9" cy="9" r="5.300" strokeWidth="3" /><path d="M9 0v3M9 15v3M0 9h3M15 9h3M2.600 2.600l2.200 2.200M13.200 13.200l2.200 2.200M2.600 15.400l2.200-2.200M13.200 4.800l2.200-2.200" strokeWidth="3" /></svg>
      </TaskItem>
      <TaskItem cls="ml-[5px] w-12 bg-[#4d5f68]" bar>
        <div className="mr-px flex h-[22px] w-[22px] items-center justify-center bg-[#f5f7f9]"><TableauMark cls="h-[18px] w-[18px]" color="#5b97b8" /></div>
      </TaskItem>
      <TaskItem cls="ml-[5px] w-10" bar>
        <svg className="h-6 w-5" viewBox="0 0 20 24" fill="none">
          <path d="M2 4c4-4 13-3 15 3 2 5-1 10-6 10" stroke="#d83b12" strokeWidth="3.500" /><path d="M2 2l7 3-6 2z" fill="#d83b12" />
          <path d="M9 1v16M15 8l-7 9" stroke="#d5d9dc" strokeWidth="2.500" /><circle cx="4.500" cy="18.500" r="2.700" stroke="#0f6cbd" strokeWidth="2" /><circle cx="12" cy="20.500" r="2.500" stroke="#1a9be8" strokeWidth="2" />
        </svg>
      </TaskItem>

      <div className="ml-auto flex h-10 items-center">
        <svg className="h-5 w-[23px]" viewBox="0 0 23 20"><path d="M9 0c.5 3 3 6 6 7l-6 6c-4 0-8-2-9-5l3 .5L2 5l4 1.500z" fill="#fcb816" /><path d="M6 19.500c-5 0-5-6.500-.5-7C6 8 13 6 15.500 10c5-1 8 3 7 6-.5 2.500-2.500 3.500-5 3.500z" fill="#c5e2f8" /></svg>
        <span className="ml-[8px] w-[37px] pt-0.5 text-[14px] tracking-[-0.3px]">26°C</span>
        <span className="ml-px w-[77px] pt-0.5 text-[14px] tracking-[0.6px] whitespace-nowrap">구름 조금</span>
        <svg className="h-4 w-[141px] shrink-0" viewBox="1638 1052 141 16" fill="none" stroke="#fff" strokeWidth="1.300">
          <path d="M1639 1063l6-6 6 6" />
          <path d="M1667.500 1056.500h8.500v7.500h-10v-3M1676.500 1059v3" /><path d="M1668.500 1058.500h6v4h-6z" fill="#fff" stroke="none" /><path d="M1661.500 1055v3.500h4V1055M1663.500 1059v2.500h3" />
          <path d="M1688.500 1066c0-6 4-10.500 11-11M1692 1066c0-4.500 3-7.500 7.500-8M1695.500 1066c0-2.500 1.500-4.500 4-5" stroke="#c8ced6" /><circle cx="1698.500" cy="1065.500" r="1.500" fill="#fff" stroke="none" />
          <path d="M1709.500 1058h2.500l4-3.500v11.500l-4-3.500h-2.500zM1718.500 1057.500c1.500 1.500 1.500 4 0 5.500M1720.800 1055.500c2.500 2.500 2.500 7 0 9.500" /><path d="M1723 1053.500c3.500 3.500 3.500 10 0 13.500" stroke="#8390a0" />
          <circle cx="1740" cy="1060" r="7" fill="#8d95a0" stroke="none" /><path d="M1737 1057l6 6M1743 1057l-6 6" stroke="#1b2840" strokeWidth="2" />
          <path d="M1762 1052.500h14v15h-14z" fill="#fff" stroke="none" />
        </svg>
        <span className="-ml-[17px] w-[14px] text-center text-[12px] leading-[15px] font-medium text-black">한</span>
        <div className="ml-[17px] flex w-[68px] flex-col items-center text-[12px] leading-[18px] whitespace-nowrap">
          <span>오후 11:55</span>
          <span>2021-08-09</span>
        </div>
        <div className="relative ml-[19px] h-10 w-[36px] border-r border-[#5a6575]">
          <svg className="absolute top-3 left-0 h-4 w-4" viewBox="0 0 16 16"><path d="M0 0h16v13H9l-3 3v-3H0z" fill="#fff" /><path d="M3 4h10M3 7h10M3 10h7" stroke="#1b2840" /></svg>
          <div className="absolute top-[19px] left-[5px] flex h-[18px] w-[21px] items-center justify-center rounded-full border border-[#8a8f96] bg-[#333b45] text-[12px] leading-none font-semibold">14</div>
        </div>
        <div className="w-1" />
      </div>
    </div>
  );
}

export default function App() {
  return (
    <div className="relative flex h-[1080px] w-[1920px] flex-col overflow-hidden bg-[#f4f4f4] font-['Open_Sans','Noto_Sans_CJK_KR',sans-serif] leading-none text-black [word-spacing:1px]">
      <TitleBar />
      <MenuBar />
      <Toolbar />
      <div className="flex h-[905px] shrink-0">
        <DataPane />
        <Cards />
        <Workspace />
      </div>
      <SheetTabs />
      <StatusBar />
      <Taskbar />
      <ShowMe />
    </div>
  );
}
